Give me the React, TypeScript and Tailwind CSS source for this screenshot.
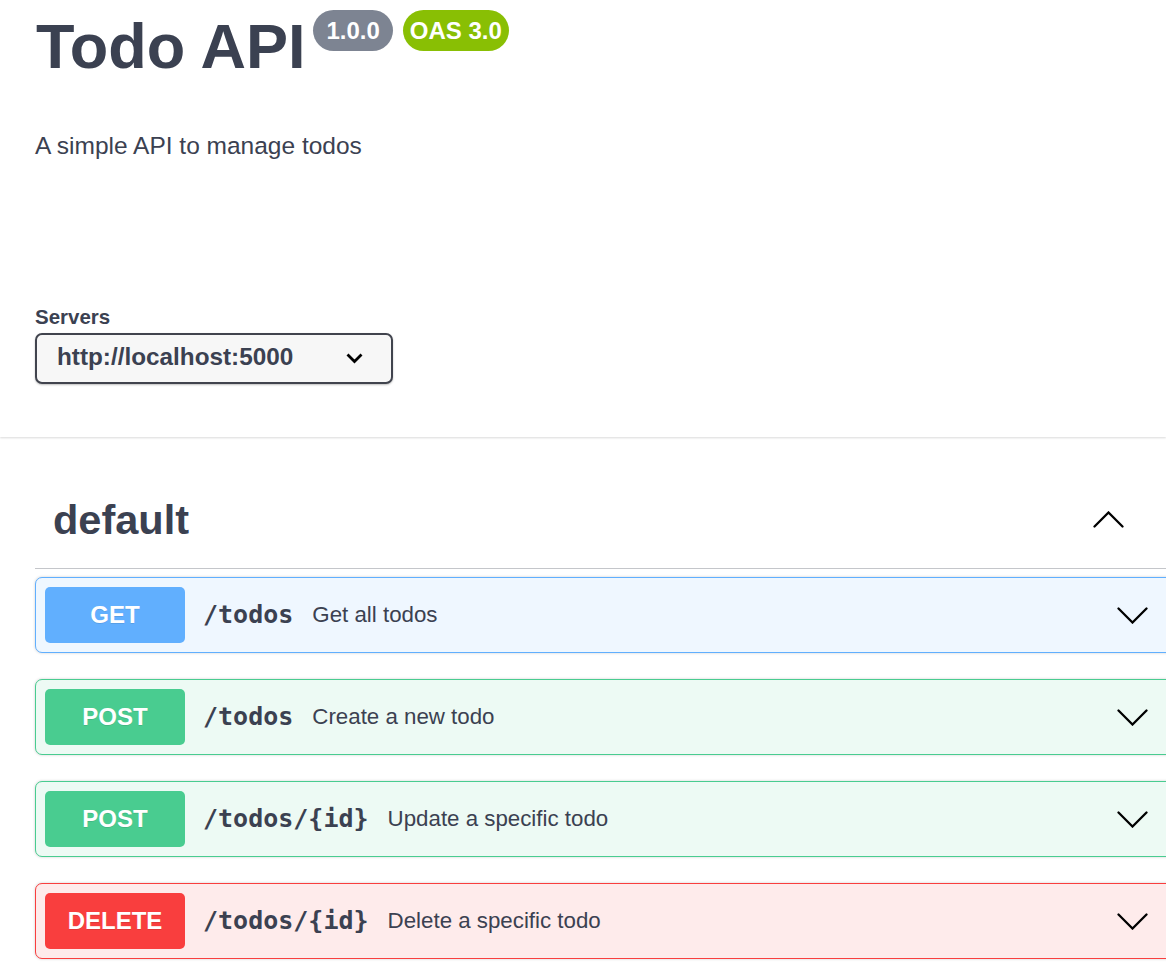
import React from "react";

const Chevron = ({ up = false }: { up?: boolean }) => (
  <svg width="31" height="17" viewBox="0 0 31 17" fill="none" className="shrink-0">
    <polyline
      points={up ? "1.5,15.5 15.5,1.5 29.5,15.5" : "1.5,1.5 15.5,15.5 29.5,1.5"}
      stroke="#000"
      strokeWidth="2.3"
      strokeLinecap="round"
      strokeLinejoin="miter"
    />
  </svg>
);

const operations = [
  {
    method: "GET",
    path: "/todos",
    summary: "Get all todos",
    block: "border-[#61affe] bg-[#eff7ff]",
    badge: "bg-[#61affe]",
  },
  {
    method: "POST",
    path: "/todos",
    summary: "Create a new todo",
    block: "border-[#49cc90] bg-[#edfaf4]",
    badge: "bg-[#49cc90]",
  },
  {
    method: "POST",
    path: "/todos/{id}",
    summary: "Update a specific todo",
    block: "border-[#49cc90] bg-[#edfaf4]",
    badge: "bg-[#49cc90]",
  },
  {
    method: "DELETE",
    path: "/todos/{id}",
    summary: "Delete a specific todo",
    block: "border-[#f93e3e] bg-[#feebeb]",
    badge: "bg-[#f93e3e]",
  },
];

const App = () => {
  return (
    <div className="min-h-screen w-full overflow-hidden bg-white font-['Liberation_Sans',Arial,sans-serif] text-[#3b4151]">
      {/* info + servers */}
      <div className="w-[1166px] shadow-[0_1px_2px_0_rgba(0,0,0,0.15)] pl-[36px] pt-[10px] pb-[53px]">
        <div className="flex items-start">
          <h1 className="text-[63px] leading-[72px] font-bold">Todo API</h1>
          <div className="flex gap-[10px] ml-[8px]">
            <span className="h-[41px] px-[13px] rounded-full bg-[#7d8492] text-white text-[24px] font-bold flex items-center">
              1.0.0
            </span>
            <span className="h-[41px] px-[7px] rounded-full bg-[#89bf04] text-white text-[24px] font-bold flex items-center">
              OAS 3.0
            </span>
          </div>
        </div>
        <p className="mt-[50px] text-[24.5px] leading-[28px] -ml-[1px]">A simple API to manage todos</p>

        <div className="mt-[145px] -ml-[1px]">
          <div className="text-[20.5px] leading-[24px] font-bold">Servers</div>
          <div className="mt-[4px] w-[358px] h-[51px] border-2 border-[#41444e] rounded-[7px] bg-[#f7f7f7] shadow-[0_1px_2px_0_rgba(0,0,0,0.25)] pl-[20px] pr-[28px] flex items-center justify-between">
            <span className="text-[24.3px] font-bold -mt-[3px]">http://localhost:5000</span>
            <svg width="17" height="11" viewBox="0 0 17 11" fill="none">
              <polyline points="1.5,1.5 8.5,8.5 15.5,1.5" stroke="#000" strokeWidth="2.8" />
            </svg>
          </div>
        </div>
      </div>

      {/* operations */}
      <div className="ml-[35px] w-[1140px] pt-[59px]">
        <div className="flex items-center justify-between border-b border-[#3b4151]/30 pl-[18px] pr-[51px] pb-[25px]">
          <h3 className="text-[41.5px] leading-[47px] font-bold">default</h3>
          <Chevron up />
        </div>

        <div className="mt-[8px] flex flex-col gap-[26px]">
          {operations.map((op, i) => (
            <div
              key={i}
              className={`flex items-center border rounded-[7px] px-[9px] py-[9px] pr-[26px] shadow-[0_0_3px_rgba(0,0,0,0.19)] ${op.block}`}
            >
              <div
                className={`w-[140px] h-[56px] rounded-[5px] flex items-center justify-center text-white text-[24px] font-bold [text-shadow:0_1px_0_rgba(0,0,0,0.1)] ${op.badge}`}
              >
                {op.method}
              </div>
              <span className="ml-[18px] font-['DejaVu_Sans_Mono',monospace] text-[25px] font-bold">
                {op.path}
              </span>
              <span className="ml-[19px] text-[22.3px]">{op.summary}</span>
              <div className="ml-auto">
                <Chevron />
              </div>
            </div>
          ))}
        </div>
      </div>
    </div>
  );
};

export default App;
